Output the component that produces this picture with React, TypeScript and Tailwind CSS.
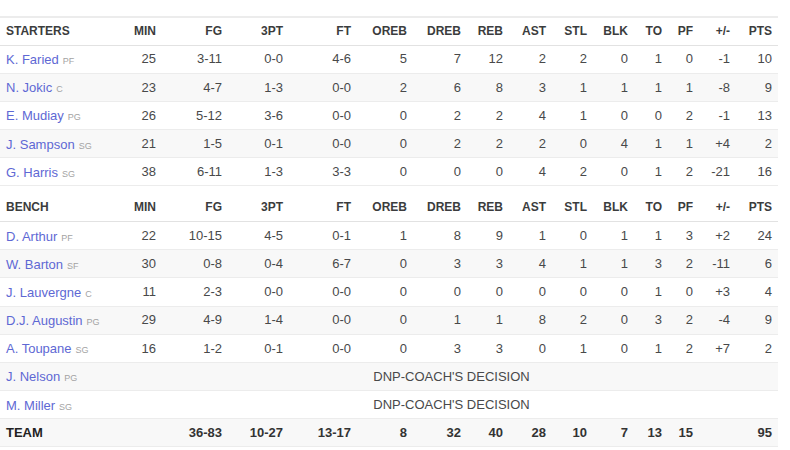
import React from 'react'

type Player = {
  name: string
  pos: string
  stats?: (string | number)[]
  dnp?: string
}

const cols = ['MIN', 'FG', '3PT', 'FT', 'OREB', 'DREB', 'REB', 'AST', 'STL', 'BLK', 'TO', 'PF', '+/-', 'PTS']
// column widths so right edges line up with the screenshot
const widths = [125, 37, 66, 61, 68, 56, 54, 42, 43, 41, 41, 34, 31, 37, 42]

const starters: Player[] = [
  { name: 'K. Faried', pos: 'PF', stats: [25, '3-11', '0-0', '4-6', 5, 7, 12, 2, 2, 0, 1, 0, '-1', 10] },
  { name: 'N. Jokic', pos: 'C', stats: [23, '4-7', '1-3', '0-0', 2, 6, 8, 3, 1, 1, 1, 1, '-8', 9] },
  { name: 'E. Mudiay', pos: 'PG', stats: [26, '5-12', '3-6', '0-0', 0, 2, 2, 4, 1, 0, 0, 2, '-1', 13] },
  { name: 'J. Sampson', pos: 'SG', stats: [21, '1-5', '0-1', '0-0', 0, 2, 2, 2, 0, 4, 1, 1, '+4', 2] },
  { name: 'G. Harris', pos: 'SG', stats: [38, '6-11', '1-3', '3-3', 0, 0, 0, 4, 2, 0, 1, 2, '-21', 16] },
]

const bench: Player[] = [
  { name: 'D. Arthur', pos: 'PF', stats: [22, '10-15', '4-5', '0-1', 1, 8, 9, 1, 0, 1, 1, 3, '+2', 24] },
  { name: 'W. Barton', pos: 'SF', stats: [30, '0-8', '0-4', '6-7', 0, 3, 3, 4, 1, 1, 3, 2, '-11', 6] },
  { name: 'J. Lauvergne', pos: 'C', stats: [11, '2-3', '0-0', '0-0', 0, 0, 0, 0, 0, 0, 1, 0, '+3', 4] },
  { name: 'D.J. Augustin', pos: 'PG', stats: [29, '4-9', '1-4', '0-0', 0, 1, 1, 8, 2, 0, 3, 2, '-4', 9] },
  { name: 'A. Toupane', pos: 'SG', stats: [16, '1-2', '0-1', '0-0', 0, 3, 3, 0, 1, 0, 1, 2, '+7', 2] },
  { name: 'J. Nelson', pos: 'PG', dnp: "DNP-COACH'S DECISION" },
  { name: 'M. Miller', pos: 'SG', dnp: "DNP-COACH'S DECISION" },
]

const team = ['36-83', '10-27', '13-17', 8, 32, 40, 28, 10, 7, 13, 15, '', 95]

function HeaderRow({ label, first }: { label: string; first?: boolean }) {
  const top = first ? 'border-t-2 border-t-[#ececec]' : ''
  return (
    <tr>
      <th className={`h-[28px] border-b border-b-[#e2e2e2] pl-[6px] text-left text-[12px] font-bold text-[#3b3c3d] ${top}`}>
        {label}
      </th>
      {cols.map((c) => (
        <th key={c} className={`border-b border-b-[#e2e2e2] pr-[6px] text-right text-[12px] font-bold text-[#3b3c3d] ${top}`}>
          {c}
        </th>
      ))}
    </tr>
  )
}

function PlayerRow({ p, striped }: { p: Player; striped: boolean }) {
  return (
    <tr className={striped ? 'bg-[#f8f8f8]' : 'bg-white'}>
      <td className="h-[28.2px] border-b border-[#ececec] pl-[6px] whitespace-nowrap">
        <span className="text-[13px] text-[#5e68d4]">{p.name}</span>
        <span className="ml-[4px] text-[9px] uppercase text-[#a3a3a3]">{p.pos}</span>
      </td>
      {p.dnp ? (
        <td colSpan={14} className="border-b border-[#ececec] text-center text-[13px] text-[#48494a]">
          {p.dnp}
        </td>
      ) : (
        p.stats!.map((s, i) => (
          <td key={i} className="border-b border-[#ececec] pr-[6px] text-right text-[13px] text-[#48494a]">
            {s}
          </td>
        ))
      )}
    </tr>
  )
}

export default function App() {
  return (
    <div className="h-[450px] w-[790px] overflow-hidden bg-white pt-[16px]" style={{ fontFamily: '"Liberation Sans", Arial, sans-serif' }}>
      <table className="w-[778px] table-fixed border-collapse">
        <colgroup>
          {widths.map((w, i) => (
            <col key={i} style={{ width: w }} />
          ))}
        </colgroup>
        <tbody>
          <HeaderRow label="STARTERS" first />
          {starters.map((p, i) => (
            <PlayerRow key={p.name} p={p} striped={i % 2 === 1} />
          ))}
        </tbody>
      </table>
      <table className="mt-[7px] w-[778px] table-fixed border-collapse">
        <colgroup>
          {widths.map((w, i) => (
            <col key={i} style={{ width: w }} />
          ))}
        </colgroup>
        <tbody>
          <HeaderRow label="BENCH" />
          {bench.map((p, i) => (
            <PlayerRow key={p.name} p={p} striped={i % 2 === 1} />
          ))}
          <tr className="bg-[#f8f8f8]">
            <td colSpan={2} className="h-[28.2px] border-b border-[#ececec] pl-[6px] text-[13px] font-bold text-[#222]">
              TEAM
            </td>
            {team.map((s, i) => (
              <td key={i} className="border-b border-[#ececec] pr-[6px] text-right text-[13px] font-bold text-[#333]">
                {s}
              </td>
            ))}
          </tr>
        </tbody>
      </table>
    </div>
  )
}
